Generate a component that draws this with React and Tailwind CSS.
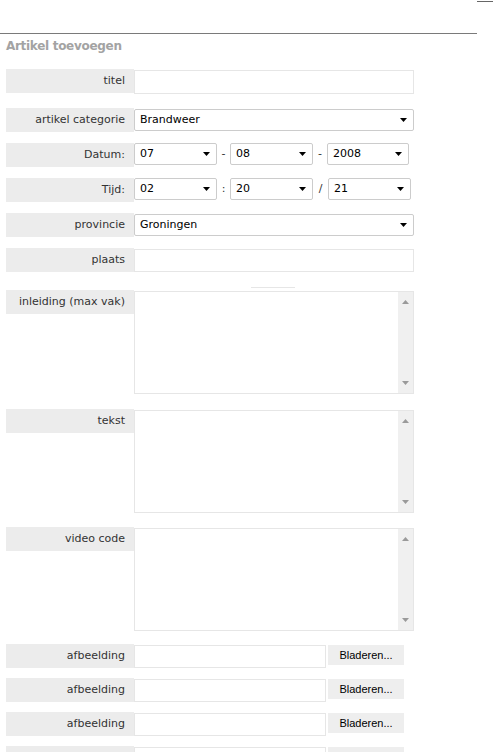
import React from "react";

const font = { fontFamily: '"DejaVu Sans", Verdana, sans-serif' };

function Arrow({ color = "#000" }) {
  return (
    <svg width="7" height="4" viewBox="0 0 7 4" className="shrink-0">
      <polygon points="0,0 7,0 3.5,4" fill={color} />
    </svg>
  );
}

function Label({ children }) {
  return (
    <div className="w-[128px] h-[24px] shrink-0 bg-[#ececec] text-right pr-[9px] text-[11px] leading-[24px] text-[#333]">
      {children}
    </div>
  );
}

function Select({ text, className }) {
  return (
    <div
      className={
        "flex items-center justify-between h-[22px] border border-[#cccccc] rounded-[2px] bg-white pl-[5px] pr-[6px] text-[11px] text-black " +
        className
      }
    >
      <span>{text}</span>
      <Arrow />
    </div>
  );
}

function TextArea() {
  return (
    <div className="mt-[1px] w-[280px] h-[103px] border border-[#e6e6e6] bg-white flex justify-end">
      <div className="w-[15px] h-full bg-[#f0f0f0] flex flex-col items-center justify-between py-[8px]">
        <svg width="7" height="4" viewBox="0 0 7 4">
          <polygon points="3.5,0 7,4 0,4" fill="#9a9a9a" />
        </svg>
        <svg width="7" height="4" viewBox="0 0 7 4">
          <polygon points="0,0 7,0 3.5,4" fill="#9a9a9a" />
        </svg>
      </div>
    </div>
  );
}

function Sep({ children, w }) {
  return (
    <div className={"h-[22px] flex items-end justify-center pb-[3px] text-[11px] text-[#333] " + w}>
      {children}
    </div>
  );
}

function FileRow({ mt }) {
  return (
    <div className={"flex items-start " + mt}>
      <Label>afbeelding</Label>
      <div className="mt-[1px] w-[192px] h-[23px] border border-[#e6e6e6] bg-white" />
      <div
        className="ml-[2px] mt-[1px] w-[76px] h-[20px] bg-[#eeeeee] flex items-center justify-center text-[11px] text-black"
        style={{ fontFamily: '"Liberation Sans", Arial, sans-serif' }}
      >
        Bladeren...
      </div>
    </div>
  );
}

export default function App() {
  return (
    <div className="w-[493px] h-[752px] overflow-hidden bg-white" style={font}>
      <div className="h-[33px] flex justify-end items-start">
        <div className="mt-[1px] w-[16px] h-[1px] bg-[#666]" />
      </div>
      <div className="w-[477px] h-px bg-[#7a7a7a]" />
      <div className="h-[35px] pl-[6px] pt-[5px]">
        <div className="text-[12px] leading-[14px] font-bold text-[#a3a3a3] tracking-[-0.3px]">
          Artikel toevoegen
        </div>
      </div>

      <div className="pl-[6px] flex flex-col">
        <div className="flex items-start">
          <Label>titel</Label>
          <div className="mt-[1px] w-[280px] h-[24px] border border-[#e6e6e6] bg-white" />
        </div>

        <div className="flex items-start mt-[14px]">
          <Label>artikel categorie</Label>
          <div className="mt-[1px]">
            <Select text="Brandweer" className="w-[280px]" />
          </div>
        </div>

        <div className="flex items-start mt-[11px]">
          <Label>Datum:</Label>
          <Select text="07" className="w-[83px]" />
          <Sep w="w-[13px]">-</Sep>
          <Select text="08" className="w-[83px]" />
          <Sep w="w-[14px]">-</Sep>
          <Select text="2008" className="w-[82px]" />
        </div>

        <div className="flex items-start mt-[11px]">
          <Label>Tijd:</Label>
          <Select text="02" className="w-[83px]" />
          <Sep w="w-[13px]">:</Sep>
          <Select text="20" className="w-[83px]" />
          <Sep w="w-[15px]">/</Sep>
          <Select text="21" className="w-[83px]" />
        </div>

        <div className="flex items-start mt-[11px]">
          <Label>provincie</Label>
          <div className="mt-[1px]">
            <Select text="Groningen" className="w-[280px]" />
          </div>
        </div>

        <div className="flex items-start mt-[11px]">
          <Label>plaats</Label>
          <div className="mt-[1px] w-[280px] h-[23px] border border-[#e6e6e6] bg-white" />
        </div>

        <div className="mt-[15px] ml-[245px] w-[44px] h-px bg-[#e6e6e6]" />

        <div className="flex items-start mt-[2px]">
          <Label>inleiding (max vak)</Label>
          <TextArea />
        </div>

        <div className="flex items-start mt-[15px]">
          <Label>tekst</Label>
          <TextArea />
        </div>

        <div className="flex items-start mt-[14px]">
          <Label>video code</Label>
          <TextArea />
        </div>

        <FileRow mt="mt-[13px]" />
        <FileRow mt="mt-[10px]" />
        <FileRow mt="mt-[10px]" />
        <FileRow mt="mt-[10px]" />
      </div>
    </div>
  );
}
